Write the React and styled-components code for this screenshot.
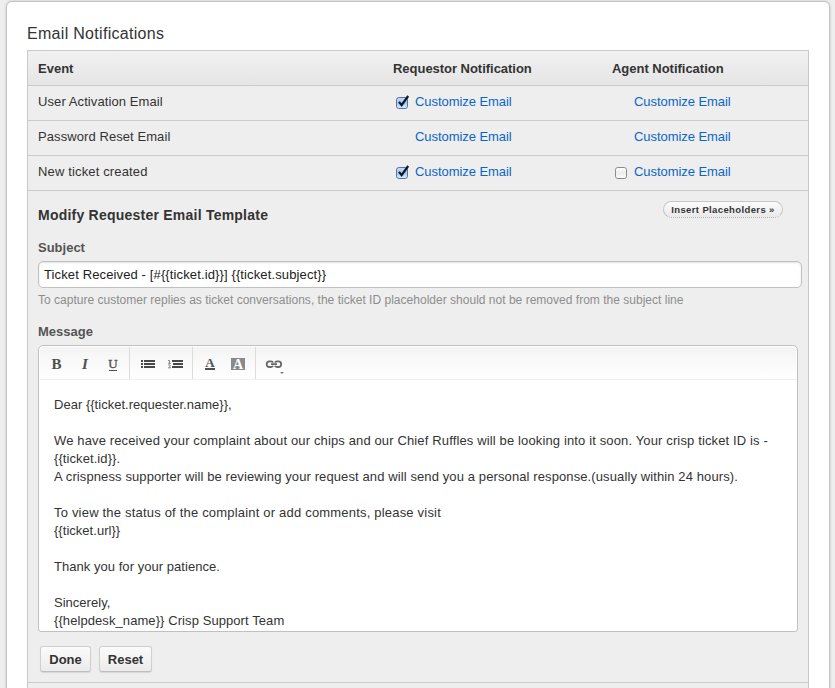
import React from "react";
import styled, { createGlobalStyle, css } from "styled-components";

const GlobalStyle = createGlobalStyle`
  *, *::before, *::after { box-sizing: border-box; }
  html, body { margin: 0; background: #eeeeee; overflow: hidden; }
  body { font: 13px/18px "Liberation Sans", Arial, sans-serif; color: #333; }
  button, input { font-family: inherit; }
`;

const Page = styled.main`
  width: 835px;
  height: 688px;
  padding: 1px 5px 0 6px;
  overflow: hidden;
`;

const Card = styled.section`
  height: 720px;
  padding: 22px 20px 0;
  background: #fff;
  border: 1px solid #c4c4c4;
  border-radius: 6px;
  box-shadow: 0 0 3px rgba(0, 0, 0, 0.18);
`;

const Title = styled.h1`
  margin: 0;
  height: 26px;
  font-size: 16px;
  font-weight: 400;
  line-height: 19px;
  letter-spacing: 0.3px;
`;

const Table = styled.div`
  height: 660px;
  background: #eeeeee;
  border: 1px solid #c9c9c9;
`;

const Row = styled.div`
  display: grid;
  grid-template-columns: 355px 219px 1fr;
  height: 35px;
  padding: 7px 0 0 10px;
  border-bottom: 1px solid #cacaca;
  ${(p) =>
    p.$head &&
    css`
      padding-top: 9px;
      font-weight: 700;
      background: linear-gradient(#f1f1f1, #e5e5e5);
    `}
`;

const Cell = styled.div`
  display: flex;
  white-space: nowrap;
  letter-spacing: ${(p) => p.$spacing || "0"};
`;

const CheckSlot = styled.span`
  flex: none;
  width: 22px;
  height: 18px;
  padding: 2px 0 0 3px;
`;

const Link = styled.a`
  color: #0a66c6;
  text-decoration: none;
  cursor: pointer;
`;

const Panel = styled.div`
  height: 492px;
  padding: 10px 6px 0 10px;
  border-bottom: 1px solid #cacaca;
`;

const PanelHead = styled.div`
  display: flex;
  justify-content: space-between;
  align-items: flex-start;
  height: 38px;
  padding-right: 19px;
`;

const PanelTitle = styled.h2`
  margin: 5px 0 0;
  font-size: 14px;
  line-height: 18px;
  letter-spacing: 0.23px;
  white-space: nowrap;
`;

const Pill = styled.button`
  width: 120px;
  height: 17px;
  padding: 0;
  border: 1px solid #c6c6c6;
  border-bottom: 1px dotted #aaa;
  border-radius: 9px;
  background: linear-gradient(#fcfcfc, #e9e9e9);
  color: #333;
  font-size: 9.5px;
  font-weight: 700;
  line-height: 15px;
  letter-spacing: 0.38px;
  white-space: nowrap;
`;

const Label = styled.label`
  display: block;
  height: 22px;
  font-weight: 700;
  color: #555;
`;

const Subject = styled.input`
  display: block;
  width: 764px;
  height: 27px;
  padding: 0 5px 1px;
  border: 1px solid #c0c0c0;
  border-radius: 5px;
  background: #fff;
  box-shadow: inset 0 1px 2px rgba(0, 0, 0, 0.12);
  color: #222;
  font-size: 13px;
  letter-spacing: 0.125px;
  outline: none;
`;

const Hint = styled.p`
  margin: 3px 0 0;
  height: 32px;
  font-size: 12px;
  color: #8d8d8d;
  white-space: nowrap;
  letter-spacing: 0.015px;
`;

const Editor = styled.div`
  width: 760px;
  height: 287px;
  padding: 1px;
  overflow: hidden;
  border: 1px solid #c0c0c0;
  border-radius: 5px 5px 3px 3px;
  background: #fff;
`;

const Toolbar = styled.div`
  display: flex;
  height: 33px;
  border-bottom: 1px solid #efefef;
  border-radius: 4px 4px 0 0;
  background: linear-gradient(#f4f4f4, #fff);
`;

const ToolGroup = styled.div`
  display: flex;
  width: ${(p) => p.$width};
  padding-left: ${(p) => p.$inset || "4px"};
  border-right: ${(p) => (p.$last ? "0" : "1px solid #dcdcdc")};
`;

const Tool = styled.button`
  width: 28px;
  height: 32px;
  padding: 0;
  border: 0;
  background: none;
  svg { display: block; }
`;

const Message = styled.div`
  padding: 16px 14px 0;
`;

const Line = styled.div`
  height: 18px;
  white-space: pre;
  letter-spacing: ${(p) => p.$spacing}px;
`;

const Actions = styled.div`
  display: flex;
  gap: 8px;
  padding: 14px 0 0 2px;
`;

const Button = styled.button`
  width: ${(p) => p.$width};
  height: 26px;
  padding: 0;
  border: 1px solid #cfcfcf;
  border-bottom-color: #bebebe;
  border-radius: 3px;
  background: linear-gradient(#fbfbfb, #ebebeb);
  box-shadow: 0 1px 1px rgba(0, 0, 0, 0.1);
  color: #333;
  font-size: 13px;
  font-weight: 700;
`;

const CheckBox = ({ checked }) => (
  <svg width="16" height="16" viewBox="0 0 16 16">
    <defs>
      <linearGradient id={checked ? "boxOn" : "boxOff"} x1="0" y1="0" x2="0" y2="1">
        <stop offset="0" stopColor={checked ? "#c9dcf4" : "#ffffff"} />
        <stop offset="0.5" stopColor={checked ? "#9fc9f3" : "#ececec"} />
        <stop offset="1" stopColor={checked ? "#d3f4ff" : "#ffffff"} />
      </linearGradient>
    </defs>
    <rect
      x="0.5"
      y="2.5"
      width="11"
      height="11"
      rx="2.3"
      fill={`url(#${checked ? "boxOn" : "boxOff"})`}
      stroke={checked ? "#62709f" : "#8b8b8b"}
    />
    {checked && <path d="M3 6.9 5.6 10.2 12.2 1" fill="none" stroke="#101828" strokeWidth="2.2" />}
  </svg>
);

const Glyph = ({ children, ...rest }) => (
  <text
    x="14"
    y="22"
    textAnchor="middle"
    fontFamily="Liberation Serif, serif"
    fontWeight="700"
    fontSize="14"
    fill="#505050"
    {...rest}
  >
    {children}
  </text>
);

const ToolIcon = ({ name }) => (
  <svg width="28" height="32" viewBox="0 0 28 32">
    {name === "bold" && <Glyph x="13.5" fontSize="15">B</Glyph>}
    {name === "italic" && <Glyph fontSize="15" fontStyle="italic">I</Glyph>}
    {name === "underline" && (
      <>
        <Glyph y="21" fontSize="13" fontWeight="400" stroke="#505050" strokeWidth="0.35">U</Glyph>
        <path d="M10 23.5h8" stroke="#505050" />
      </>
    )}
    {name === "bullets" && (
      <path
        fill="#484848"
        d="M7 13h2v2H7zM10 13h11v2H10zM7 16h2v2H7zM10 16h11v2H10zM7 19h2v2H7zM10 19h11v2H10z"
      />
    )}
    {name === "numbers" && (
      <>
        <path fill="#484848" d="M10 13h11v2H10zM11 16h10v2H11zM10 19h11v2H10z" />
        <path
          fill="none"
          stroke="#777"
          strokeWidth="0.9"
          d="M6 13.5h1.5V16M6 16.3h3M6.2 18h2v1.3L6.4 20.8H9"
        />
      </>
    )}
    {name === "color" && (
      <>
        <Glyph x="13" y="20" fontSize="13">A</Glyph>
        <path d="M8 22h10" stroke="#505050" strokeWidth="2" />
      </>
    )}
    {name === "highlight" && (
      <>
        <path d="M6 11h14v12H6z" fill="#8a8a8a" />
        <Glyph x="13" y="22" fill="#fff">A</Glyph>
      </>
    )}
    {name === "link" && (
      <>
        <path
          fill="none"
          stroke="#686868"
          strokeWidth="1.8"
          d="M13 15.6Q12.6 14.4 11 14.4H9.5a2.8 2.8 0 0 0 0 5.6H11q1.6 0 2-1.2M15 15.6Q15.4 14.4 17 14.4h1.4a2.8 2.8 0 0 1 0 5.6H17q-1.6 0-2-1.2M11 17.2h6"
        />
        <path d="M20 25h4l-2 2z" fill="#777" />
      </>
    )}
  </svg>
);

const EVENTS = [
  { name: "User Activation Email", spacing: "0.09px", requestor: true },
  { name: "Password Reset Email", spacing: "0.08px" },
  { name: "New ticket created", spacing: "0.15px", requestor: true, agent: false },
];

const TOOL_GROUPS = [
  { width: "90px", tools: ["bold", "italic", "underline"], inset: "3px" },
  { width: "63px", tools: ["bullets", "numbers"] },
  { width: "63px", tools: ["color", "highlight"] },
  { width: "60px", tools: ["link"], last: true },
];

const MESSAGE = [
  { text: "Dear {{ticket.requester.name}},", spacing: 0.02 },
  { text: "" },
  {
    text: "We have received your complaint about our chips and our Chief Ruffles will be looking into it soon. Your crisp ticket ID is -",
    spacing: 0.137,
  },
  { text: "{{ticket.id}}.", spacing: 0.08 },
  {
    text: "A crispness supporter will be reviewing your request and will send you a personal response.(usually within 24 hours).",
    spacing: 0.108,
  },
  { text: "" },
  { text: "To view the status of the complaint or add comments, please visit", spacing: 0.195 },
  { text: "{{ticket.url}}", spacing: 0.03 },
  { text: "" },
  { text: "Thank you for your patience.", spacing: 0.04 },
  { text: "" },
  { text: "Sincerely,", spacing: 0.02 },
  { text: "{{helpdesk_name}} Crisp Support Team", spacing: 0.08 },
];

const NotificationCell = ({ checked }) => (
  <Cell $spacing="-0.06px">
    <CheckSlot>{checked !== undefined && <CheckBox checked={checked} />}</CheckSlot>
    <Link>Customize Email</Link>
  </Cell>
);

export default function App() {
  return (
    <>
      <GlobalStyle />
      <Page>
        <Card>
          <Title>Email Notifications</Title>
          <Table>
            <Row $head>
              <Cell>Event</Cell>
              <Cell $spacing="-0.03px">Requestor Notification</Cell>
              <Cell $spacing="-0.02px">Agent Notification</Cell>
            </Row>
            {EVENTS.map((event) => (
              <Row key={event.name}>
                <Cell $spacing={event.spacing}>{event.name}</Cell>
                <NotificationCell checked={event.requestor} />
                <NotificationCell checked={event.agent} />
              </Row>
            ))}
            <Panel>
              <PanelHead>
                <PanelTitle>Modify Requester Email Template</PanelTitle>
                <Pill>Insert Placeholders »</Pill>
              </PanelHead>
              <Label>Subject</Label>
              <Subject defaultValue="Ticket Received - [#{{ticket.id}}] {{ticket.subject}}" />
              <Hint>
                To capture customer replies as ticket conversations, the ticket ID placeholder should not be removed from the subject line
              </Hint>
              <Label>Message</Label>
              <Editor>
                <Toolbar>
                  {TOOL_GROUPS.map((group) => (
                    <ToolGroup key={group.tools[0]} $width={group.width} $inset={group.inset} $last={group.last}>
                      {group.tools.map((tool) => (
                        <Tool key={tool} aria-label={tool}>
                          <ToolIcon name={tool} />
                        </Tool>
                      ))}
                    </ToolGroup>
                  ))}
                </Toolbar>
                <Message>
                  {MESSAGE.map((line, index) => (
                    <Line key={index} $spacing={line.spacing || 0}>
                      {line.text}
                    </Line>
                  ))}
                </Message>
              </Editor>
              <Actions>
                <Button $width="51px">Done</Button>
                <Button $width="53px">Reset</Button>
              </Actions>
            </Panel>
          </Table>
        </Card>
      </Page>
    </>
  );
}
